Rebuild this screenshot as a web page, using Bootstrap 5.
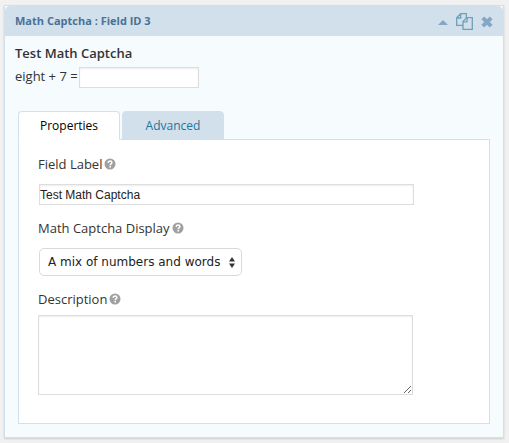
<!DOCTYPE html>
<html lang="en">
<head>
<meta charset="utf-8">
<meta name="viewport" content="width=device-width, initial-scale=1">
<title>Math Captcha field</title>
<link href="https://cdn.jsdelivr.net/npm/bootstrap@5.3.0/dist/css/bootstrap.min.css" rel="stylesheet">
<style>
body { background: #f1f1f1; font-family: "Open Sans", sans-serif; font-size: 13px; line-height: 20px; color: #333; padding: 5px 5px 5px 4px; }
.field-card { background: #f6fbfe; border: 1px solid #d2e0eb; border-radius: 0; box-shadow: 0 1px 2px rgba(0,0,0,.15); }
.field-head { background: #d2e0eb; border: 0; border-radius: 0; height: 30px; padding: 0 10px; }
.field-title { font-size: 11px; line-height: 16px; font-weight: 700; color: #4a7197; }
.tool-btn { border: 0; background: none; padding: 0; line-height: 0; color: #83a7c5; }
.tool-btn svg { display: block; }
.preview { padding: 7px 10px 0; }
.preview-label { font-weight: 600; color: #333; }
.preview-row { gap: 1px; padding-top: 3px; }
.form-control.box { font-family: "Liberation Sans", sans-serif; font-size: 12px; line-height: 16px; color: #222; border: 1px solid #ddd; border-radius: 0; padding: 0; background: #fff; box-shadow: inset 0 1px 2px rgba(0,0,0,.07); }
.answer { width: 120px; height: 21px; margin-top: 1px; }
.settings { margin: 23px 13px 13px; }
.tabs { border: 0; gap: 2px; }
.tabs .nav-link { border: 1px solid #d2e0eb; border-radius: 4px 4px 0 0; background: #d2e0eb; color: #21759b; font-size: 12px; width: 102px; height: 29px; margin: 0; padding: 0; line-height: 27px; }
.tabs .nav-link.active { background: #fff; border-color: #d2e0eb #d2e0eb #fff; color: #000; }
.panel { background: #fff; border: 1px solid #d2e0eb; margin-top: -1px; padding: 14px 19px 28px; }
.wide { max-width: 375px; }
.label-row { gap: 2px; margin-bottom: 10px; }
.label-row.tight { margin-bottom: 6px; }
.text-field { height: 21px; margin: 0 0 13px 1px; }
.form-select.choice { font-family: "DejaVu Sans", sans-serif; font-size: 12px; line-height: 16px; color: #222; width: 203px; height: 28px; margin: 0 0 13px 1px; padding: 0 20px 0 8px; border: 1px solid #d9d9d9; border-radius: 5px; background-color: #fff; background-image: url("data:image/svg+xml,%3Csvg xmlns='http://www.w3.org/2000/svg' viewBox='0 0 6 11'%3E%3Cpath d='M0 4.5 3 0l3 4.500zM0 6.500h6L3 11z' fill='%23333'/%3E%3C/svg%3E"); background-size: 6px 11px; background-position: right 6px center; }
textarea.box { height: 80px; min-height: 80px; }
</style>
<script src="https://cdn.jsdelivr.net/npm/bootstrap@5.3.0/dist/js/bootstrap.bundle.min.js" defer></script>
</head>
<body>
<svg class="d-none" aria-hidden="true">
  <symbol id="help" viewBox="0 0 12 12"><circle cx="6" cy="6" r="5.500" fill="#a0a0a0"/><path d="M4.100 4.900Q4.200 3.100 6 3.100T7.900 4.600Q7.900 5.500 6.900 6Q6.200 6.300 6.200 7.200" fill="none" stroke="#fff" stroke-width="1.500"/><path d="M5.400 8h1.600v1.500H5.400z" fill="#fff"/></symbol>
</svg>
<main class="card field-card">
  <header class="card-header field-head d-flex align-items-center justify-content-between">
    <h1 class="field-title mb-0">Math Captcha : Field ID 3</h1>
    <div class="d-flex align-items-center gap-2">
      <button type="button" class="tool-btn" aria-label="Collapse"><svg width="10" height="9" viewBox="0 0 10 9"><path d="M0 8 5 3l5 5z" fill="currentColor"/></svg></button>
      <button type="button" class="tool-btn" aria-label="Duplicate"><svg width="17" height="17" viewBox="0 0 17 17" fill="none" stroke="#6f9fbe" stroke-width="1.300"><path d="M7 12.400H.700V4.800L4.700.700h5.600v4M.700 5h4V.700"/><path d="M7 8.400 10.700 4.600h5.600v11.700H7zM7 8.800h4V4.600"/></svg></button>
      <button type="button" class="tool-btn" aria-label="Delete"><svg width="12" height="14" viewBox="0 0 12 14"><path d="M1.800 3.800l8.400 8.400M10.200 3.800l-8.400 8.400" stroke="currentColor" stroke-width="4"/></svg></button>
    </div>
  </header>
  <section class="preview">
    <div class="preview-label">Test Math Captcha</div>
    <div class="d-flex align-items-start preview-row">
      <label for="answer">eight + 7 =</label>
      <input id="answer" type="text" class="form-control box answer">
    </div>
  </section>
  <section class="settings">
    <div class="nav nav-tabs tabs" role="tablist">
      <button type="button" class="nav-link active" role="tab" id="tab-properties" data-bs-toggle="tab" data-bs-target="#properties" aria-selected="true">Properties</button>
      <button type="button" class="nav-link" role="tab" id="tab-advanced" data-bs-toggle="tab" data-bs-target="#advanced" aria-selected="false">Advanced</button>
    </div>
    <div class="tab-content panel">
      <div class="tab-pane active" id="properties" role="tabpanel" aria-labelledby="tab-properties">
        <div class="d-flex align-items-center label-row"><label for="field-label">Field Label</label><svg width="12" height="12"><use href="#help"/></svg></div>
        <div class="wide"><input id="field-label" type="text" class="form-control box text-field" value="Test Math Captcha"></div>
        <div class="d-flex align-items-center label-row"><label for="display">Math Captcha Display</label><svg width="12" height="12"><use href="#help"/></svg></div>
        <select id="display" class="form-select choice"><option>A mix of numbers and words</option></select>
        <div class="d-flex align-items-center label-row tight"><label for="description">Description</label><svg width="12" height="12"><use href="#help"/></svg></div>
        <textarea id="description" class="form-control box wide"></textarea>
      </div>
      <div class="tab-pane" id="advanced" role="tabpanel" aria-labelledby="tab-advanced"></div>
    </div>
  </section>
</main>
</body>
</html>
